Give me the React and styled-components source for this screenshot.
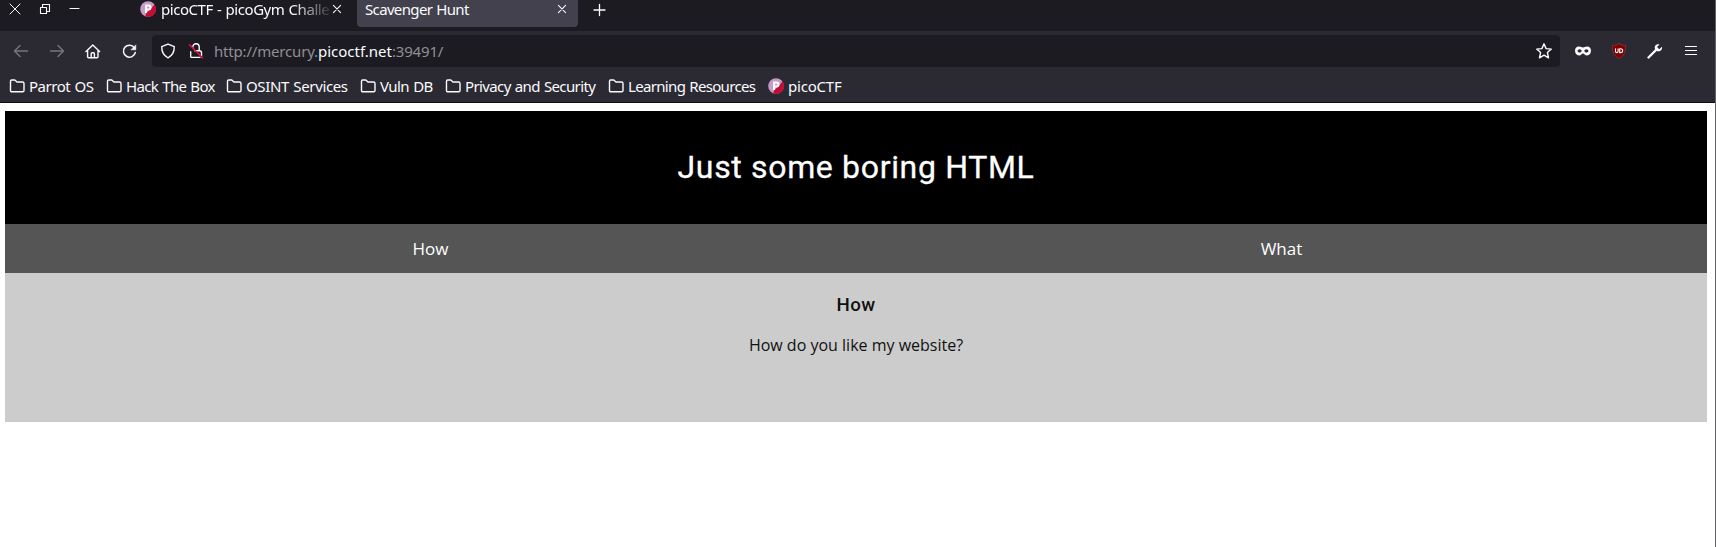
import React from "react";
import styled, { createGlobalStyle } from "styled-components";

const Global = createGlobalStyle`
  * { box-sizing: border-box; }
  body { margin: 0; background: #fff; overflow: hidden; }
`;

const Window = styled.div`
  width: 1716px;
  height: 547px;
  border-right: 1px solid #646466;
  background: #fff;
  overflow: hidden;
`;

const Chrome = styled.div`
  height: 103px;
  background: #2b2a33;
  border-bottom: 1px solid #0c0c0d;
  font-family: "Noto Sans", sans-serif;
  font-size: 15px;
  line-height: 20px;
  word-spacing: 0.8px;
  color: #fbfbfe;
  white-space: nowrap;
`;

const Glyph = styled.svg`
  display: block;
  flex: none;
  width: ${(p) => p.$w || 16}px;
  height: ${(p) => p.$h || p.$w || 16}px;
  fill: none;
  stroke: ${(p) => p.$color || "#fbfbfe"};
  stroke-width: ${(p) => p.$line || 1.4};
  stroke-linecap: round;
  stroke-linejoin: round;
  overflow: visible;
`;

const TabStrip = styled.div`
  display: flex;
  height: 31px;
  background: #1c1b22;
`;

const WindowControls = styled.div`
  display: flex;
  gap: 19px;
  width: 132px;
  padding: 4px 0 0 10px;
`;

const Tab = styled.div`
  display: flex;
  align-items: flex-start;
  width: ${(p) => p.$width}px;
  height: 27px;
  padding: 0 ${(p) => p.$right}px 0 8px;
  background: ${(p) => (p.$active ? "#42414d" : "transparent")};
  border-radius: 0 0 4px 4px;
`;

const TabTitle = styled.span`
  flex: 1;
  min-width: 0;
  overflow: hidden;
  line-height: 19px;
  letter-spacing: ${(p) => p.$track || 0}px;
  ${(p) => p.$fade && "mask-image: linear-gradient(to right, #000 76%, transparent 101%);"}
`;

const TabIcon = styled.span`
  margin: 1px 5px 0 0;
`;

const TabClose = styled.span`
  padding-top: 5px;
`;

const NewTab = styled.div`
  padding: 4px 0 0 15px;
`;

const NavBar = styled.div`
  display: flex;
  align-items: center;
  height: 40px;
  padding: 0 16px 0 13px;
`;

const NavButtons = styled.div`
  display: flex;
  align-items: center;
  flex: none;
  gap: 20px;
  width: 139px;
`;

const AddressBar = styled.div`
  display: flex;
  align-items: center;
  flex: none;
  width: 1408px;
  height: 32px;
  padding: 0 8px;
  background: #1c1b22;
  border-radius: 4px;
`;

const Url = styled.span`
  flex: 1;
  margin-left: 10px;
  color: #8f8f94;
  letter-spacing: -0.18px;
`;

const Domain = styled.span`
  color: #fbfbfe;
  letter-spacing: 0;
`;

const Spacer = styled.span`
  flex: none;
  width: ${(p) => p.$w}px;
`;

const Extensions = styled.div`
  display: flex;
  align-items: center;
  gap: 20px;
  margin-left: 15px;
`;

const Bookmarks = styled.div`
  display: flex;
  height: 31px;
  padding: 5px 0 0 9px;
`;

const Bookmark = styled.div`
  display: flex;
  align-items: flex-start;
  flex: none;
  width: ${(p) => p.$width}px;
  gap: 4px;
  letter-spacing: ${(p) => p.$track}px;
`;

const BookmarkIcon = styled.span`
  padding-top: 2px;
`;

const Page = styled.main`
  padding: 8px 8px 0 5px;
  color: #111;
  font-family: "Noto Sans", sans-serif;
  text-align: center;
`;

const Header = styled.header`
  height: 113px;
  padding-top: 36px;
  background: #000;
`;

const Title = styled.h1`
  margin: 0;
  color: #fff;
  font: 400 32px/40px Roboto, sans-serif;
  letter-spacing: 0.66px;
  -webkit-text-stroke: 0.3px #fff;
`;

const PageTabs = styled.nav`
  display: flex;
  height: 49px;
  background: #555;
`;

const PageTab = styled.button`
  flex: 1;
  border: 0;
  padding: 0;
  background: transparent;
  color: #fff;
  font: 17px/22px "Open Sans", sans-serif;
`;

const Panel = styled.section`
  height: 149px;
  padding-top: 20px;
  background: #ccc;
`;

const PanelTitle = styled.h3`
  margin: 0;
  font: 500 18.72px/24px Roboto, sans-serif;
  letter-spacing: 0.4px;
`;

const PanelText = styled.p`
  margin: 17px 0 0;
  font: 16px/22px "Open Sans", sans-serif;
`;

const Cross = ({ size = 8 }) => (
  <Glyph $w={size} viewBox="0 0 10 10" $line={1.3}><path d="M.5.5l9 9M9.5.5l-9 9" /></Glyph>
);

const Folder = () => (
  <Glyph viewBox="0 0 16 16">
    <path d="M1.5 12.5V3.2Q1.5 2 2.7 2h3.1L8 4h5.5q1.5 0 1.5 1.5v7q0 1.3-1.3 1.3H2.8q-1.3 0-1.3-1.3z" />
  </Glyph>
);

const PicoBadge = () => (
  <Glyph viewBox="0 0 16 16">
    <circle cx="8" cy="8" r="7.8" fill="#c79bc8" stroke="none" />
    <path d="M14.5 3.6A7.8 7.8 0 0 1 5.2 15.3L6.3 12 9.7 9z" fill="#c60c30" stroke="none" />
    <path d="M6.1 12V4.6h2.4a2 2 0 0 1 0 4H6.2" stroke="#fff" strokeWidth="2" strokeLinecap="butt" strokeLinejoin="miter" />
  </Glyph>
);

const bookmarks = [
  ["Parrot OS", 97, -0.48],
  ["Hack The Box", 120, -0.65],
  ["OSINT Services", 134, -0.36],
  ["Vuln DB", 85, -0.55],
  ["Privacy and Security", 163, -0.62],
  ["Learning Resources", 160, -0.67],
  ["picoCTF", 90, -0.2],
];

export default function App() {
  return (
    <Window>
      <Global />
      <Chrome>
        <TabStrip>
          <WindowControls>
            <Glyph $w={10} viewBox="0 0 10 10" $line={1}><path d="M0 0l10 10M10 0L0 10" /></Glyph>
            <Glyph $w={11} viewBox="0 0 11 11" $line={1.1}><path d="M1.5 3.5h6v6h-6zM3.5 3.5v-3h7v7h-3" /></Glyph>
            <Glyph $w={10} viewBox="0 0 10 10" $line={1.1}><path d="M1 4.5h9" /></Glyph>
          </WindowControls>
          <Tab $width={225} $right={16}>
            <TabIcon><PicoBadge /></TabIcon>
            <TabTitle $fade $track={-0.46}>picoCTF - picoGym Challe</TabTitle>
            <TabClose><Cross /></TabClose>
          </Tab>
          <Tab $active $width={221} $right={12}>
            <TabTitle $track={-0.65}>Scavenger Hunt</TabTitle>
            <TabClose><Cross /></TabClose>
          </Tab>
          <NewTab>
            <Glyph $w={12} viewBox="0 0 12 12" $line={1.3}><path d="M6.5 .5v11M1 6h11" /></Glyph>
          </NewTab>
        </TabStrip>
        <NavBar>
          <NavButtons>
            <Glyph viewBox="0 0 16 16" $color="#77767e"><path d="M14.5 8H1.5M7 2.5L1.500 8l5.500 5.500" /></Glyph>
            <Glyph viewBox="0 0 16 16" $color="#77767e"><path d="M1.500 8h13M9 2.500L14.500 8l-5.500 5.500" /></Glyph>
            <Glyph viewBox="0 0 16 16"><path d="M1 8.5L7.8 2l6.8 6.500M2.600 8v5.800q0 1 1 1h8.400q1 0 1-1V8M6.200 14.500v-3.800q0-1 1-1h1.200q1 0 1 1v3.800" /></Glyph>
            <Glyph viewBox="0 0 16 16" $line={1.5}>
              <path d="M13.3 4.6A6 6 0 1 0 14.3 9.5" />
              <path d="M14.8 2.2v4.6h-4.6z" fill="#fbfbfe" strokeWidth="0.6" />
            </Glyph>
          </NavButtons>
          <AddressBar>
            <Glyph viewBox="0 0 16 16"><path d="M8 1.2l6.3 2.4c0 4.8-1.8 9.2-6.3 11.2C3.5 12.8 1.7 8.4 1.7 3.6z" /></Glyph>
            <Spacer $w={12} />
            <Glyph viewBox="0 0 16 16">
              <path d="M4.8 4.3V4a3.2 3.2 0 0 1 6.4 0v3.6M6.7 7.7H11.5q2 0 2 2v3.3M2.7 8.7v4.7q0 1 1 1h8.2" />
              <path d="M1.5 1.8l13 13" stroke="#e8104a" strokeWidth="1.6" />
            </Glyph>
            <Url>http://mercury.<Domain>picoctf.net</Domain>:39491/</Url>
            <Glyph viewBox="0 0 16 16"><path d="M8 .8l2.1 4.8 5.2.5-3.9 3.5 1.1 5.2L8 12.2l-4.5 2.6 1.1-5.2L.7 6.1l5.2-.5z" /></Glyph>
          </AddressBar>
          <Extensions>
            <Glyph viewBox="0 0 16 16">
              <path fillRule="evenodd" fill="#fbfbfe" stroke="none" d="M4 3.5c2 0 2.5 1 4 1s2-1 4-1c2.700 0 4 1.800 4 4.300S14.500 12.500 12 12.500c-2 0-2.900-2-4-2s-2 2-4 2C1.500 12.500 0 10.300 0 7.800s1.300-4.300 4-4.300zM4.600 6.200C3.400 6.200 2.700 7 2.500 8c.6 1.100 1.300 1.500 2.200 1.500S6.300 8.900 6.800 8C6.300 6.900 5.600 6.200 4.600 6.200zM11.400 6.200c-1 0-1.700.7-2.200 1.800.5.900 1.200 1.500 2.100 1.500s1.600-.4 2.200-1.500c-.2-1-.9-1.800-2.100-1.800z" />
            </Glyph>
            <Glyph viewBox="0 0 16 16">
              <path d="M8 .5c2 1.5 4 2 6.6 2.1 0 6.4-1.3 10-6.6 13-5.300-3-6.600-6.600-6.600-13C4 2.500 6 2 8 .5z" fill="#800000" stroke="#8c3b3e" strokeWidth=".7" />
              <path d="M4.5 5.8v2.4q0 1.4 1.3 1.4t1.3-1.4V5.8M8.7 5.8h1.1a1.9 1.9 0 0 1 0 3.8H8.700z" stroke="#fff" strokeWidth="1.1" />
            </Glyph>
            <Glyph viewBox="0 0 16 16">
              <path d="M1.5 14.5L9 7" strokeWidth="2.4" />
              <path d="M12.5 1.5C9.5.3 6.9 3 8 6c1 3 4.8 3 6.5.8.7-1 .7-2 .4-3L12.3 6.2 10 4z" fill="#fbfbfe" stroke="none" />
            </Glyph>
            <Glyph viewBox="0 0 16 16" $line={1.2}><path d="M2.500 3.500h11M2.500 7.500h11M2.500 11.500h11" /></Glyph>
          </Extensions>
        </NavBar>
        <Bookmarks>
          {bookmarks.map(([label, width, track]) => (
            <Bookmark key={label} $width={width} $track={track}>
              <BookmarkIcon>{label === "picoCTF" ? <PicoBadge /> : <Folder />}</BookmarkIcon>
              {label}
            </Bookmark>
          ))}
        </Bookmarks>
      </Chrome>
      <Page>
        <Header><Title>Just some boring HTML</Title></Header>
        <PageTabs>
          <PageTab>How</PageTab>
          <PageTab>What</PageTab>
        </PageTabs>
        <Panel>
          <PanelTitle>How</PanelTitle>
          <PanelText>How do you like my website?</PanelText>
        </Panel>
      </Page>
    </Window>
  );
}
